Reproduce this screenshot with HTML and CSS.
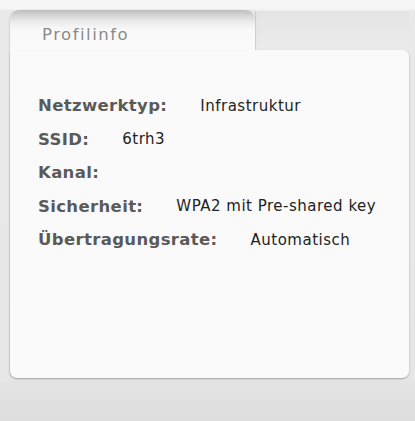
FILE: index.html
```html
<!DOCTYPE html>
<html lang="de">
<head>
<meta charset="utf-8">
<title>Profilinfo</title>
<link rel="stylesheet" href="styles.css">
</head>
<body>
<div class="page">
  <div class="tabs">
    <div class="tab"><span class="tab-title">Profilinfo</span></div>
    <div class="tab-rest"></div>
  </div>
  <div class="panel">
    <div class="row"><span class="label">Netzwerktyp:</span><span class="value">Infrastruktur</span></div>
    <div class="row"><span class="label">SSID:</span><span class="value">6trh3</span></div>
    <div class="row"><span class="label">Kanal:</span><span class="value"></span></div>
    <div class="row"><span class="label">Sicherheit:</span><span class="value">WPA2 mit Pre-shared key</span></div>
    <div class="row"><span class="label">Übertragungsrate:</span><span class="value">Automatisch</span></div>
  </div>
  <div class="footer"></div>
</div>
</body>
</html>
```

FILE: styles.css
```css
html, body {
  margin: 0;
  padding: 0;
}
body {
  width: 415px;
  height: 421px;
  overflow: hidden;
  background: linear-gradient(#f6f6f6 0, #f6f6f6 9px, #e9e9e9 10px, #e6e6e6 100%);
  font-family: "DejaVu Sans", Verdana, sans-serif;
}
.page {
  padding: 10px 6px 0 10px;
}
.tabs {
  display: flex;
  height: 40px;
}
.tab {
  width: 245px;
  border-radius: 9px 9px 0 0;
  background: linear-gradient(#bdbdbd 0, #d4d4d4 5px, #ececec 12px, #f9f9f9 20px, #fafafa 100%);
  box-shadow: -1px 0 1px rgba(0, 0, 0, 0.08);
  padding-left: 32px;
  box-sizing: border-box;
}
.tab-title {
  display: block;
  margin-top: 16px;
  font-size: 16.5px;
  letter-spacing: 1.5px;
  line-height: 18px;
  color: #8a8a8a;
}
.tab-rest {
  flex: 1;
  background: linear-gradient(#e4e4e4, #ebebeb);
  border-top: 1px solid #f2f2f2;
  box-shadow: inset 1px 0 1px rgba(0, 0, 0, 0.12);
}
.panel {
  height: 328px;
  box-sizing: border-box;
  background: #fafafa;
  border-radius: 0 6px 7px 7px;
  box-shadow: 0 1px 2px rgba(0, 0, 0, 0.3), -1px 0 1px rgba(0, 0, 0, 0.06);
  padding: 39px 0 0 28px;
}
.row {
  display: flex;
  align-items: center;
  gap: 33px;
  height: 33.5px;
}
.label {
  font-weight: bold;
  font-size: 16.5px;
  color: #5a5a5a;
  letter-spacing: 0.35px;
}
.value {
  font-size: 15px;
  letter-spacing: 0.5px;
  color: #222;
}
.footer {
  height: 45px;
  margin: 3px -6px 0 -10px;
  background: linear-gradient(#e4e4e4, #dcdcdc);
}
```
